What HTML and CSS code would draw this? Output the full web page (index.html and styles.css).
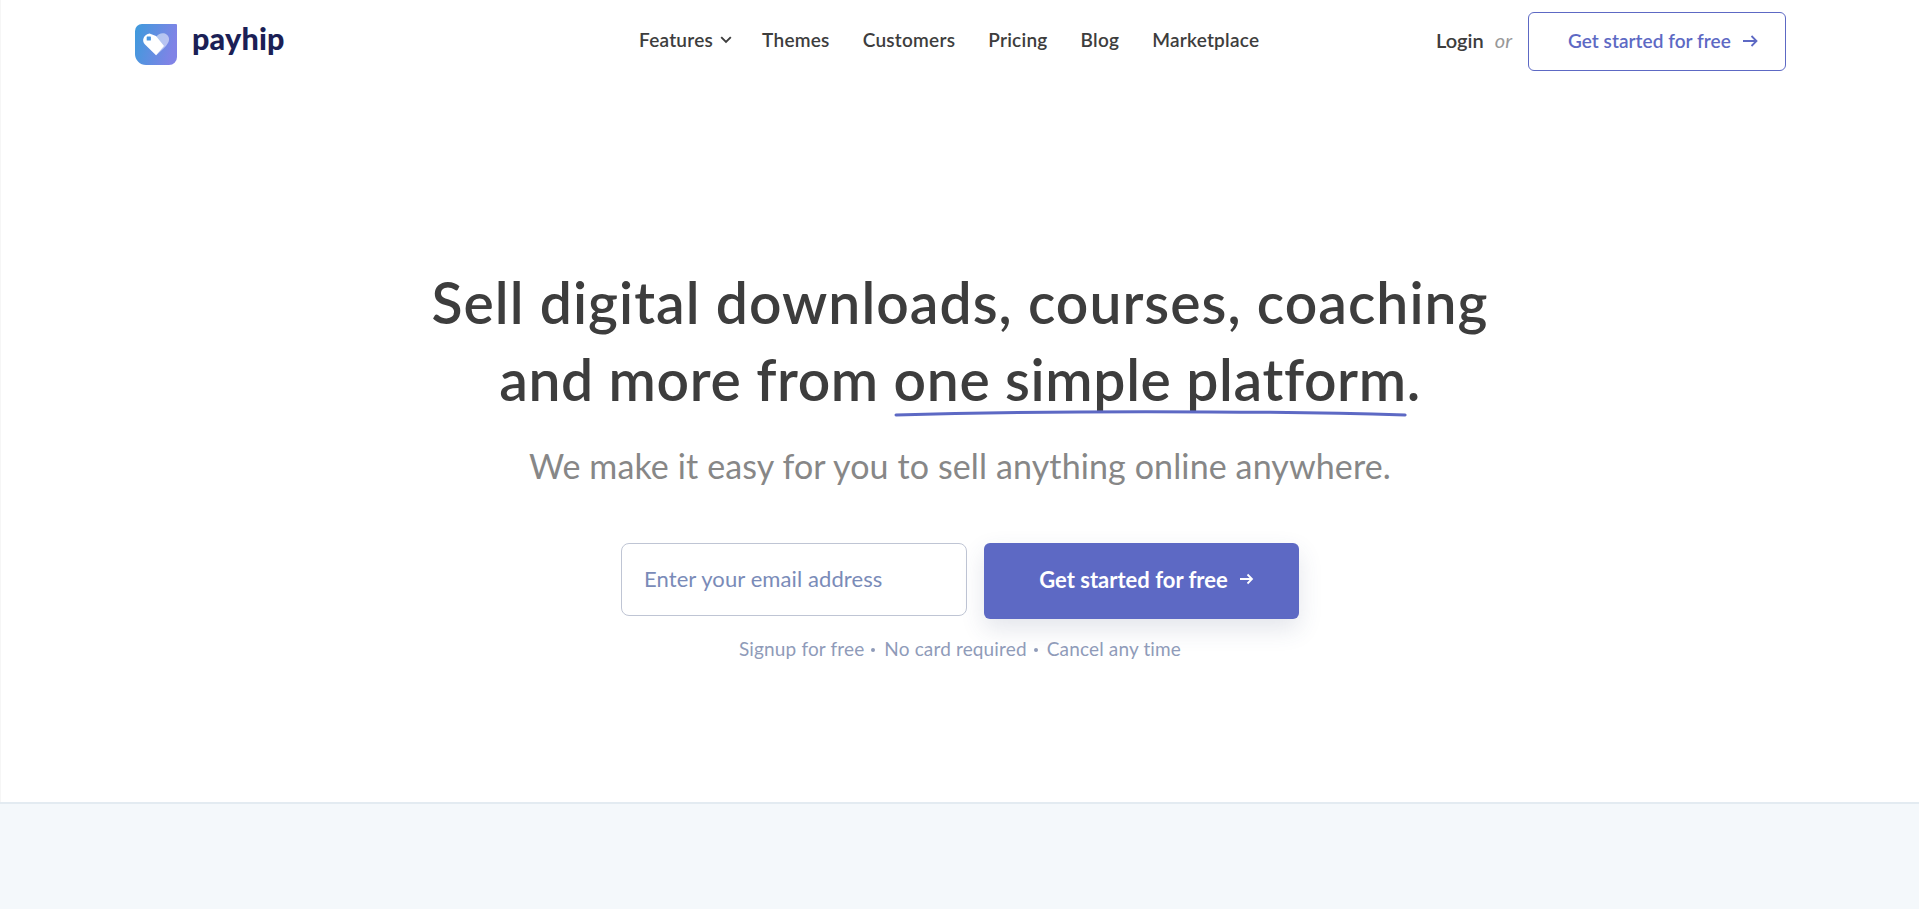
FILE: index.html
```html
<!DOCTYPE html>
<html lang="en">
<head>
<meta charset="utf-8">
<title>Payhip</title>
<link rel="stylesheet" href="styles.css">
</head>
<body>
<div class="page">
<header class="topbar">
  <a class="brand" href="#">
    <svg class="brand-mark" viewBox="0 0 42 41" width="42" height="41" aria-hidden="true">
      <defs><linearGradient id="lg" x1="0" y1="0" x2="1" y2="0.25"><stop offset="0" stop-color="#3d9bdc"/><stop offset="1" stop-color="#8083e6"/></linearGradient></defs>
      <path d="M0 7a7 7 0 0 1 7-7h34a1 1 0 0 1 1 1v32a8 8 0 0 1-8 8H11A11 11 0 0 1 0 30z" fill="url(#lg)"/>
      <path d="M21 13C23 9.500 27 8.500 30 9.500 33.500 11 35 14.500 33.500 18 32.500 20.500 30 23 28 25L21 31.500z" fill="#fff" opacity=".5"/>
      <path d="M14.500 9.500 21 12 29 22 21 31.300 10 20.500C8 18.500 8 16 8.300 15 9 12 11 10.500 14.500 9.500z" fill="#fff"/>
      <rect x="11.700" y="12.400" width="4.200" height="4.200" rx=".5" fill="#4a96e0"/>
    </svg>
    <span class="brand-name">payhip</span>
  </a>
  <nav class="mainnav">
    <a href="#" class="has-caret">Features
      <svg class="caret" viewBox="0 0 12 8" width="12" height="8" aria-hidden="true"><path d="M1.200 1.200 6 6l4.800-4.800" fill="none" stroke="currentColor" stroke-width="1.900"/></svg>
    </a>
    <a href="#">Themes</a>
    <a href="#">Customers</a>
    <a href="#">Pricing</a>
    <a href="#">Blog</a>
    <a href="#">Marketplace</a>
  </nav>
  <div class="account">
    <a class="login" href="#">Login</a>
    <em class="or">or</em>
    <a class="cta-outline" href="#"><span>Get started for free</span>
      <svg viewBox="0 0 15 12" width="15" height="12" aria-hidden="true"><path d="M0 6h13.500M8.500 1 13.500 6l-5 5" fill="none" stroke="currentColor" stroke-width="1.800"/></svg>
    </a>
  </div>
</header>

<main class="hero">
  <h1><span class="line-one">Sell digital downloads, courses, coaching</span><br><span class="line-two">and more from <span class="marked">one simple platform<svg class="swash" viewBox="0 0 513 8" preserveAspectRatio="none" aria-hidden="true"><path d="M2 6C150 1.500 350 1.500 511 6" fill="none" stroke="#5d69c4" stroke-width="3" stroke-linecap="round"/></svg></span>.</span></h1>
  <p class="lead">We make it easy for you to sell anything online anywhere.</p>
  <form class="signup">
    <input class="email" type="text" placeholder="Enter your email address">
    <button class="cta" type="button"><span>Get started for free</span>
      <svg viewBox="0 0 15 12" width="15" height="12" aria-hidden="true"><path d="M1 6h12M8.500 1.500 13 6l-4.500 4.500" fill="none" stroke="currentColor" stroke-width="1.800"/></svg>
    </button>
  </form>
  <p class="notes"><span>Signup for free</span><i></i><span>No card required</span><i></i><span>Cancel any time</span></p>
</main>
</div>

<section class="band"></section>
</body>
</html>
```

FILE: styles.css
```css
* { box-sizing: border-box; }
html, body { margin: 0; height: 100%; }
body {
  font-family: Lato, "Open Sans", sans-serif;
  font-variant-ligatures: none;
  color: #3d3d3d;
  background: #fff;
  overflow: hidden;
  display: flex;
  flex-direction: column;
  height: 909px;
}
a { color: inherit; text-decoration: none; }

.page {
  flex: 1;
  display: flex;
  flex-direction: column;
  border-left: 1px solid #f6f6f6;
}
.topbar {
  display: flex;
  align-items: center;
  height: 82px;
  padding: 0 133px 0 134px;
}
.brand { display: flex; align-items: flex-start; gap: 15px; width: 150px; align-self: flex-start; padding-top: 24px; }
.brand-mark { display: block; flex: none; }
.brand-name { font-weight: 900; font-size: 30.500px; line-height: 29px; color: #1b1f56; letter-spacing: .2px; }
.mainnav { display: flex; align-items: center; gap: 33px; margin-left: 354px; margin-bottom: 4px; font-size: 19px; font-weight: 600; letter-spacing: .25px; }
.has-caret { display: flex; align-items: center; gap: 7px; margin-right: -3px; }
.caret { margin-top: 1px; }
.account { display: flex; align-items: center; margin-left: auto; font-size: 19px; }
.login { font-weight: 600; font-size: 20px; margin-bottom: 3px; }
.or { color: #989898; margin: 0 16px 3px 11px; font-size: 20px; }
.cta-outline {
  display: flex; align-items: center; gap: 12px;
  width: 258px; height: 59px; padding: 0 0 1px 39px;
  border: 1px solid #5d69c4; border-radius: 6px;
  color: #5d69c4; font-weight: 600; letter-spacing: .05px;
}

.hero {
  flex: 1;
  display: flex; flex-direction: column; align-items: center;
  padding-top: 182px;
}
h1 { margin: 0; font-size: 57px; line-height: 77px; font-weight: 600; text-align: center; color: #3d3d3d; }
.line-one { letter-spacing: 1.03px; }
.line-two { letter-spacing: .63px; }
.marked { position: relative; display: inline-block; }
.swash { position: absolute; left: 0; right: 0; bottom: 1px; width: 100%; height: 8px; display: block; }
.lead { margin: 26px 0 0; font-size: 34px; line-height: 44px; letter-spacing: .12px; color: #878787; }
.signup { display: flex; align-items: flex-start; gap: 17px; margin-top: 55px; }
.email {
  width: 346px; height: 73px; padding: 0 22px 2px;
  border: 1px solid #bfc5d4; border-radius: 8px;
  font: 22px Lato, sans-serif; letter-spacing: .1px; color: #333; outline: 0; background: #fff;
}
.email::placeholder { color: #7a8bb8; opacity: 1; }
.cta {
  display: flex; align-items: center; justify-content: center; gap: 11px;
  width: 315px; height: 76px; padding: 0 0 4px 10px;
  background: #5d69c4; color: #fff; border: 0; border-radius: 6px;
  font: 700 22px Lato, sans-serif;
  box-shadow: 0 10px 24px rgba(60, 70, 110, .14);
}
.notes { display: flex; align-items: center; margin: 18px 0 0; font-size: 19px; line-height: 24px; letter-spacing: .15px; color: #8f9bb9; }
.notes i { width: 4px; height: 4px; margin: 2px 9px 0 7px; background: #8f9bb9; border-radius: 50%; }

.band { flex: none; height: 107px; background: #f4f8fb; border-top: 2px solid #e3ebf1; }
```
